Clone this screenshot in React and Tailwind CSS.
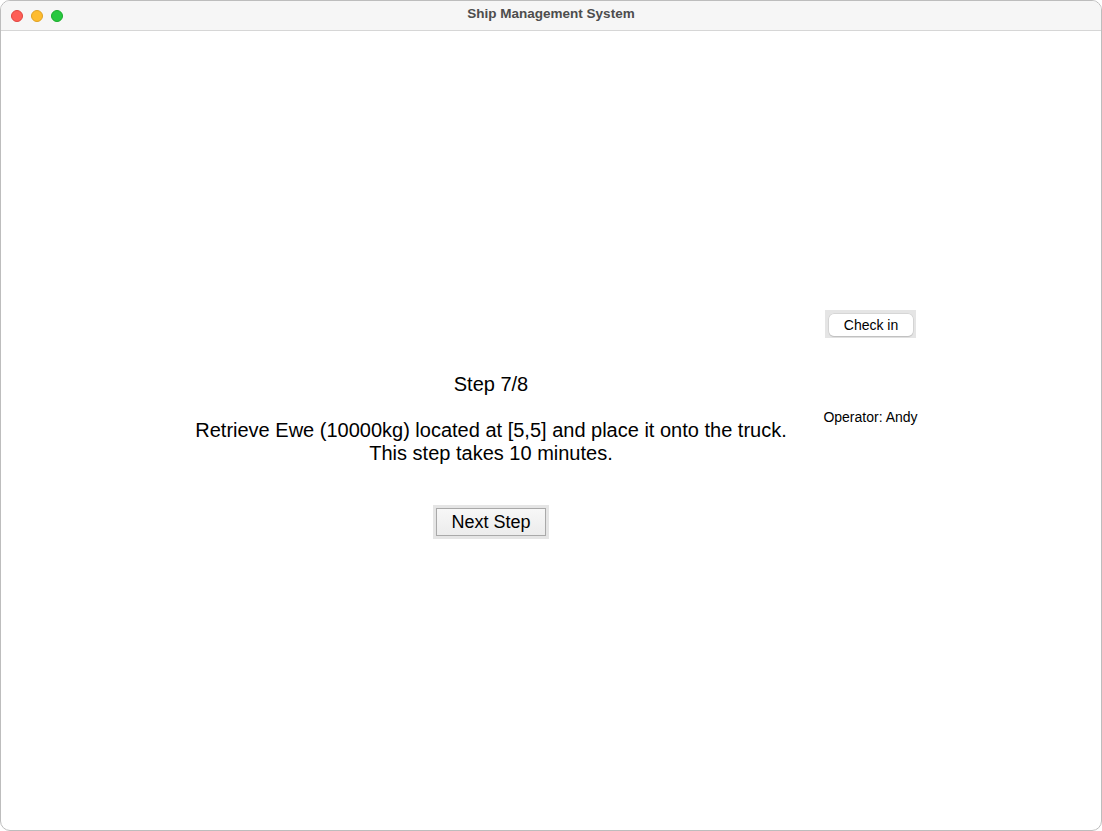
export default function App() {
  return (
    <div className="w-[1102px] h-[831px] bg-white" style={{ fontFamily: '"Liberation Sans", Arial, sans-serif' }}>
      <div className="w-full h-full rounded-[10px] border border-[#bdbdbd] overflow-hidden flex flex-col bg-white">
        <div className="h-[30px] shrink-0 bg-[#f6f6f6] border-b border-[#d6d6d6] flex items-center relative">
          <div className="flex items-center gap-[8px] pl-[10px]">
            <span className="w-[12px] h-[12px] rounded-full bg-[#fe5f57] border border-[#e0443e]"></span>
            <span className="w-[12px] h-[12px] rounded-full bg-[#febc2e] border border-[#dea123]"></span>
            <span className="w-[12px] h-[12px] rounded-full bg-[#28c840] border border-[#1aab29]"></span>
          </div>
          <div className="absolute inset-0 flex items-center justify-center text-[13.5px] font-bold text-[#4d4d4d] pb-[2px]">
            Ship Management System
          </div>
        </div>
        <div className="flex-1 flex">
          <div className="w-[180px]"></div>
          <div className="w-[620px] flex flex-col items-center pt-[342px] text-black">
            <div className="text-[20px] leading-[23px]">Step 7/8</div>
            <div className="text-[20px] leading-[23px] text-center mt-[23px]">
              Retrieve Ewe (10000kg) located at [5,5] and place it onto the truck.
              <br />
              This step takes 10 minutes.
            </div>
            <div className="mt-[40px] bg-[#e5e5e5] p-[3px]">
              <button className="block w-[110px] h-[28px] bg-gradient-to-b from-[#f7f7f7] to-[#ececec] border border-[#a9a9a9] text-[18px] leading-[26px] text-black">
                Next Step
              </button>
            </div>
          </div>
          <div className="w-[139px] flex flex-col items-center pt-[279px]">
            <div className="bg-[#e5e5e5] pl-[4px] pr-[3px] pt-[4px] pb-[2px]">
              <button className="block w-[84px] h-[22px] bg-white rounded-[5px] shadow-[0_0_0_0.5px_#c8c8c8,0_1px_1px_rgba(0,0,0,0.2)] text-[14px] leading-[22px] text-black">
                Check in
              </button>
            </div>
            <div className="mt-[71px] text-[14px] leading-[16px] text-black">Operator: Andy</div>
          </div>
        </div>
      </div>
    </div>
  );
}
